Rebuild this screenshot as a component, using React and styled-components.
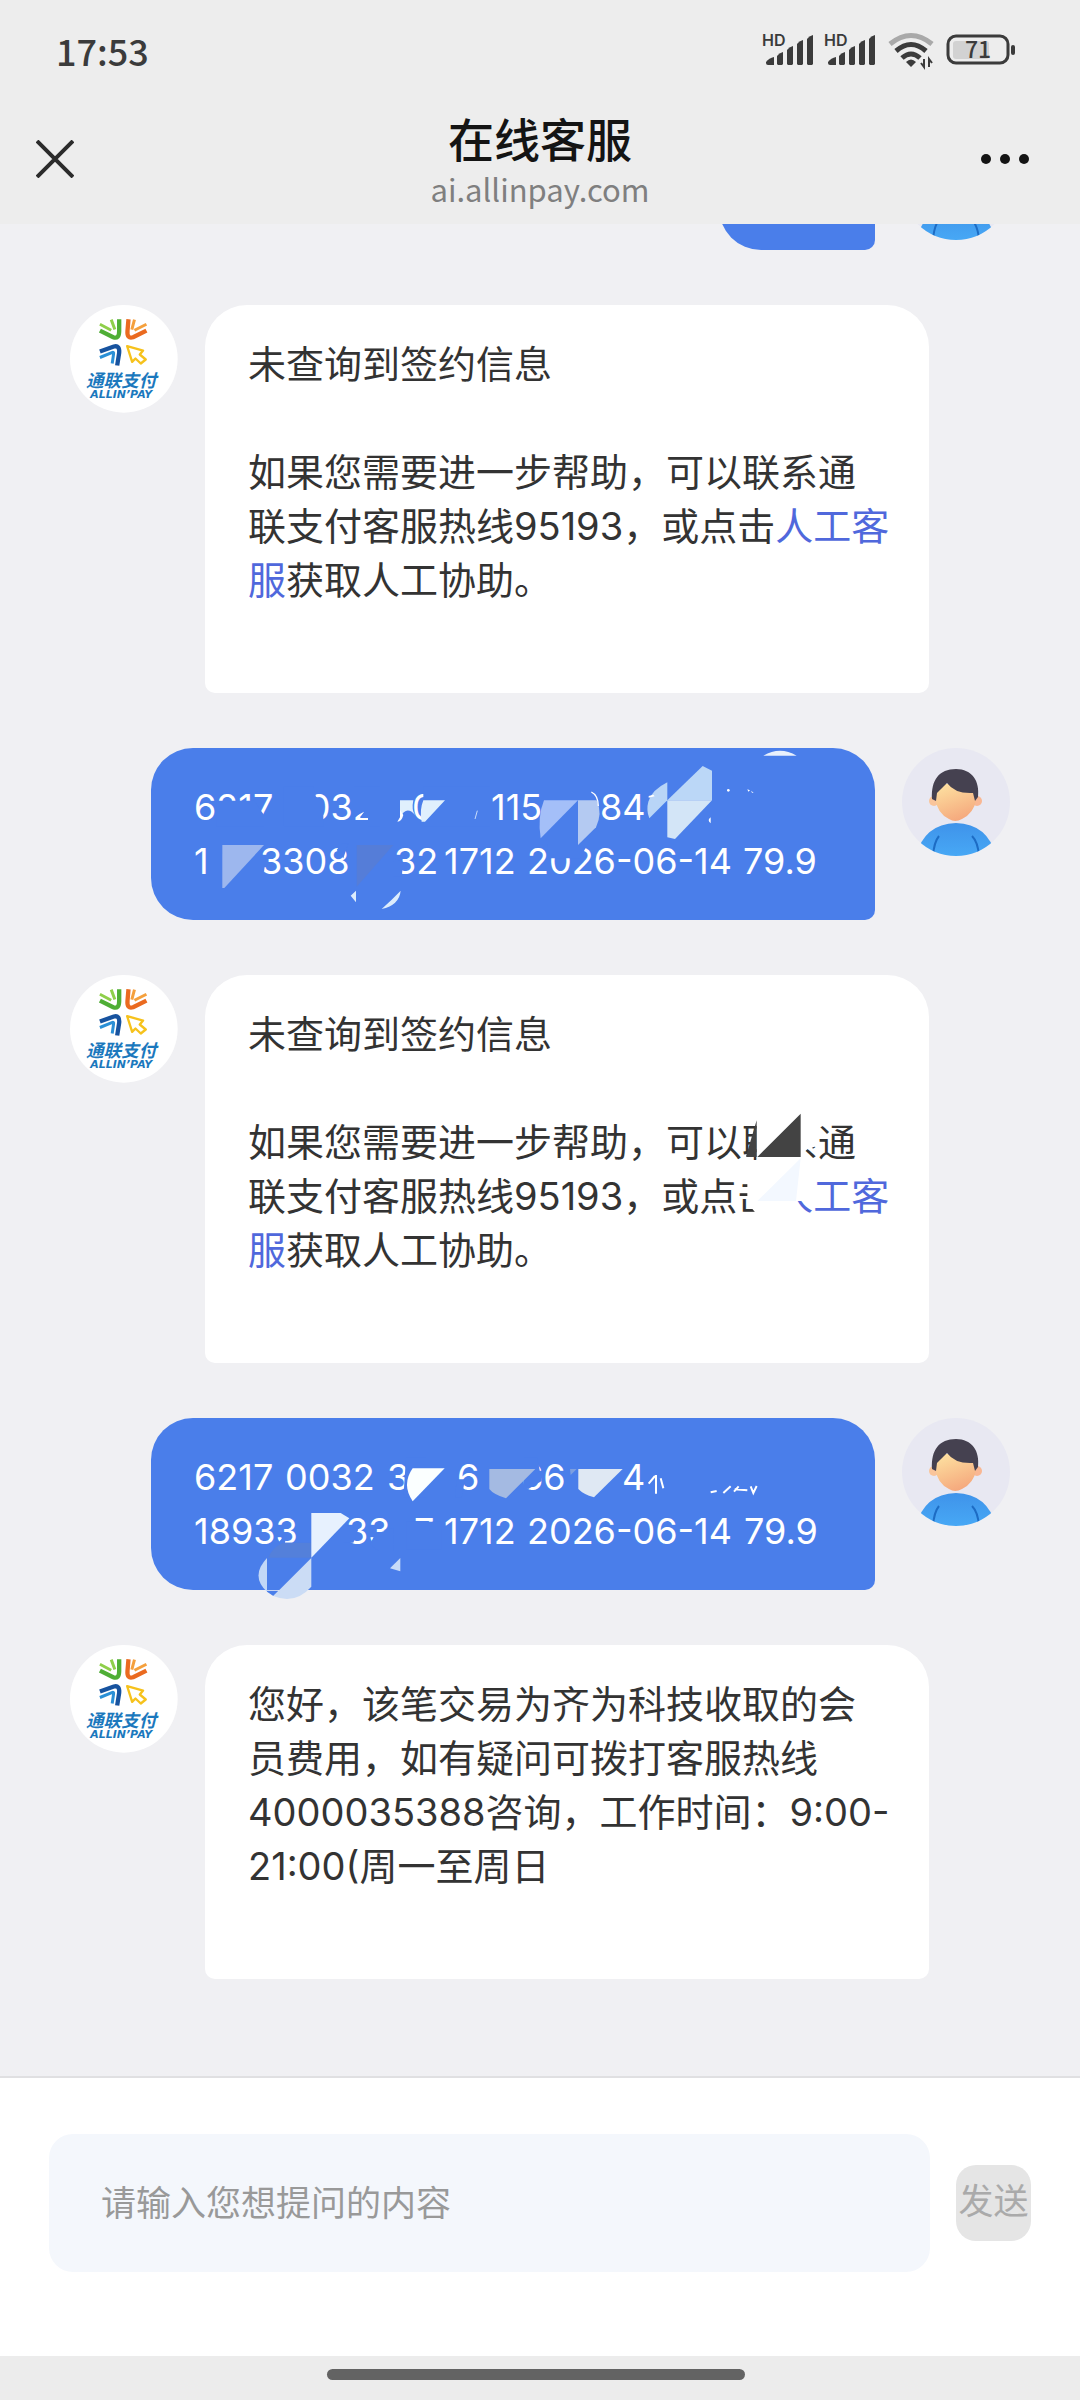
import styled, { createGlobalStyle } from "styled-components";
import { useState } from "react";

const BLUE = "#4a7eea";

const App = () => {
  const [question, setQuestion] = useState("");
  return (
    <Page>
      <GlobalStyle />
      <StatusBar>
        <Clock>17:53</Clock>
        <StatusIcons>
          <Signal />
          <Signal />
          <Wifi />
          <Battery />
        </StatusIcons>
      </StatusBar>
      <TitleBar>
        <CloseButton aria-label="关闭">
          <svg width="38" height="38" viewBox="0 0 38 38">
            <path d="M1 1L37 37M37 1L1 37" stroke="#2b2b2b" strokeWidth="4" />
          </svg>
        </CloseButton>
        <Titles>
          <Title>在线客服</Title>
          <Domain>ai.allinpay.com</Domain>
        </Titles>
        <MoreButton aria-label="更多">
          <svg width="50" height="12" viewBox="0 0 50 12">
            <circle cx="6" cy="6" r="5" fill="#141414" />
            <circle cx="25" cy="6" r="5" fill="#141414" />
            <circle cx="44" cy="6" r="5" fill="#141414" />
          </svg>
        </MoreButton>
      </TitleBar>

      <Chat>
        <UserRow>
          <ShortBubble />
          <UserAvatar />
        </UserRow>
        <BotRow>
          <BotAvatar />
          <BotBubble>
            <NoContract />
          </BotBubble>
        </BotRow>
        <UserRow>
          <UserBubble>
            <Line>
              <Chunk $w={91}>6217</Chunk>
              <Chunk $w={102}>0032</Chunk>
              <Chunk $w={25} />
              <Chunk $w={79}>0</Chunk>
              <Chunk $w={109}>115</Chunk>
              <Chunk $w={50}>84</Chunk>
            </Line>
            <Line>
              <Chunk $w={66}>1</Chunk>
              <Chunk $w={134}>3308</Chunk>
              <Chunk $w={50}>32</Chunk>
              <Chunk $w={83}>1712</Chunk>
              <Chunk $w={216}>2026-06-14</Chunk>
              <Chunk $w={70}>79.9</Chunk>
            </Line>
            <MosaicFirst />
          </UserBubble>
          <UserAvatar />
        </UserRow>
        <BotRow>
          <BotAvatar />
          <BotBubble>
            <NoContract />
            <MosaicReply />
          </BotBubble>
        </BotRow>
        <UserRow>
          <UserBubble>
            <Line>
              <Chunk $w={91}>6217</Chunk>
              <Chunk $w={102}>0032</Chunk>
              <Chunk $w={70}>3</Chunk>
              <Chunk $w={64}>6</Chunk>
              <Chunk $w={101}>66</Chunk>
              <Chunk $w={30}>4</Chunk>
            </Line>
            <Line>
              <Chunk $w={152}>18933</Chunk>
              <Chunk $w={68}>33</Chunk>
              <Chunk $w={30}>7</Chunk>
              <Chunk $w={83}>1712</Chunk>
              <Chunk $w={217}>2026-06-14</Chunk>
              <Chunk $w={70}>79.9</Chunk>
            </Line>
            <MosaicSecond />
          </UserBubble>
          <UserAvatar />
        </UserRow>
        <BotRow>
          <BotAvatar />
          <BotBubble>
            <Text>
              您好，该笔交易为齐为科技收取的会员费用，如有疑问可拨打客服热线4000035388咨询，工作时间：9:00-
              <wbr />
              21:00(周一至周日
            </Text>
          </BotBubble>
        </BotRow>
      </Chat>

      <Composer onSubmit={(e) => e.preventDefault()}>
        <QuestionInput
          aria-label="提问内容"
          placeholder="请输入您想提问的内容"
          value={question}
          onChange={(e) => setQuestion(e.target.value)}
        />
        <SendButton type="submit">发送</SendButton>
      </Composer>
      <NavBar>
        <Handle />
      </NavBar>
    </Page>
  );
};

const NoContract = () => (
  <>
    <Text>未查询到签约信息</Text>
    <SpacedText>
      如果您需要进一步帮助，可以联系通联支付客服热线95193，或点击
      <a href="#agent">人工客服</a>获取人工协助。
    </SpacedText>
  </>
);

const Signal = () => (
  <StatusIcon width="50" height="34" viewBox="0 0 50 34">
    <text x="-2" y="13" fontFamily="Inter, sans-serif" fontSize="16" fontWeight="600" fill="#3b3b3b">
      HD
    </text>
    <g fill="#3b3b3b">
      <path d="M2 29q3-4 8-5v8h-6q-2 0-2-2z" />
      <path d="M13 23q2-3 6-4v12l-1 1h-4l-1-1z" />
      <path d="M23 17q2-3 6-4v18l-1 1h-4l-1-1z" />
      <path d="M33 11q2-3 6-4v24l-1 1h-4l-1-1z" />
      <path d="M43 6q2-3 6-4v29l-1 1h-4l-1-1z" />
    </g>
  </StatusIcon>
);

const Wifi = () => (
  <StatusIcon width="46" height="36" viewBox="0 0 46 36">
    <g fill="none" strokeWidth="5">
      <path d="M2 12q21-17 42 0" stroke="#a9a9a9" />
      <path d="M8 19q15-13 30 0" stroke="#3b3b3b" />
      <path d="M14 26q9-8 18 0" stroke="#3b3b3b" />
    </g>
    <path d="M18 30q5-5 10 0l-5 5z" fill="#3b3b3b" />
    <path d="M36 27v8l-3-4M41 35v-8l3 4" fill="none" stroke="#3b3b3b" strokeWidth="2" />
  </StatusIcon>
);

const Battery = () => (
  <StatusIcon width="70" height="32" viewBox="0 0 70 32">
    <rect x="2" y="2" width="60" height="27" rx="8" fill="none" stroke="#3b3b3b" strokeWidth="3" />
    <rect x="7" y="7" width="36" height="18" rx="3" fill="#d2d2d2" />
    <rect x="65" y="11" width="4" height="10" rx="2" fill="#3b3b3b" />
    <text
      x="32"
      y="24"
      textAnchor="middle"
      fontFamily="'Noto Sans CJK SC', sans-serif"
      fontSize="23"
      fontWeight="500"
      fill="#3b3b3b"
    >
      71
    </text>
  </StatusIcon>
);

const BotAvatar = () => (
  <Avatar viewBox="60 44 325 325" role="img" aria-label="通联支付">
    <circle cx="222" cy="206" r="162" fill="#fff" />
    <g fill="none" strokeWidth="13">
      <path d="M150 102L184 120M184 88L195 118" stroke="#8fcf4a" strokeWidth="9" />
      <path d="M150 121L190 141Q208 147 208 122V87" stroke="#4fae35" />
      <path d="M290 102L254 120M254 88L246 118" stroke="#f5a03c" strokeWidth="9" />
      <path d="M290 121L250 141Q231 147 233 122L236 87" stroke="#ea6a1f" />
      <path d="M150 184L192 169Q210 164 208 188L202 226" stroke="#17539f" />
      <path d="M150 202L186 187Q193 184 191 192L187 220" stroke="#2a8fd6" strokeWidth="9" />
      <path
        d="M232 168L280 181L270 193L288 208L273 220L257 205L247 215Z"
        stroke="#f6c21c"
        strokeWidth="7"
        strokeLinejoin="round"
      />
    </g>
    <g fill="#1b78bd" fontStyle="italic" fontWeight="700">
      <text x="108" y="290" fontSize="53" fontFamily="'Noto Sans CJK SC', sans-serif">
        通联支付
      </text>
      <text x="121" y="325" fontSize="33" fontFamily="'DejaVu Sans', sans-serif">
        ALLIN’PAY
      </text>
    </g>
  </Avatar>
);

const UserAvatar = () => (
  <Avatar viewBox="0 0 108 108" role="img" aria-label="用户">
    <defs>
      <clipPath id="round">
        <circle cx="54" cy="54" r="54" />
      </clipPath>
      <linearGradient id="skin" x1="0.2" y1="0" x2="0.6" y2="1">
        <stop offset="0" stopColor="#fde0a0" />
        <stop offset="1" stopColor="#f5a77c" />
      </linearGradient>
      <linearGradient id="shirt" x1="0" y1="0" x2="0" y2="1">
        <stop offset="0" stopColor="#3f93ea" />
        <stop offset="1" stopColor="#47a8f5" />
      </linearGradient>
    </defs>
    <g clipPath="url(#round)">
      <rect width="108" height="108" fill="#e8e8f2" />
      <path d="M14 108Q22 76 54 75Q86 76 94 108Z" fill="url(#shirt)" />
      <path d="M37 88Q32 94 31 108M70 88Q76 94 77 108" fill="none" stroke="#1d6cc4" strokeWidth="2" />
      <circle cx="32" cy="53" r="5" fill="#f9c59b" />
      <circle cx="75" cy="53" r="5" fill="#f9b793" />
      <path d="M34 36H74V52Q72 65 60 71Q53 75 47 71Q35 65 34 52Z" fill="url(#skin)" />
      <path d="M30 51C29 32 37 21 54 21C70 21 78 33 76 49L73 53L71 45Q53 46 45 35Q39 41 35 45L34 53Z" fill="#454150" />
    </g>
  </Avatar>
);

// Redaction brush strokes: patches hide the digits, facets lie on top of them
const MosaicFirst = () => (
  <Mosaic width="724" height="172" viewBox="33 54 2172 516">
    <g fill={BLUE}>
      <path d="M230 212L342 212L372 255L372 290L230 290Z" />
      <path d="M430 170H520L528 200L550 210V290H430Z" />
      <path d="M642 170H720V290H684L684 264L660 264L672 245L642 262Z" />
      <path d="M850 170H1050V290H850Z" />
      <path d="M360 385L378 378L372 425L360 425Z" />
      <path d="M590 360L610 385L625 340H605Z" />
      <path d="M760 385L790 395L785 440H760Z" />
      <path d="M1220 330H1350L1320 385H1225Z" />
    </g>
    <path d="M247 345H372L253 474H247Z" fill="#9db7ee" />
    <path d="M650 345H760L650 470Z" fill="#557dd8" />
    <path d="M780 211H915L855 275H845Q838 240 850 211H820Q814 240 825 255Q800 225 780 262Z" fill="#e0f0fd" />
    <path d="M780 240V262L772 275Q785 275 790 255Z" fill="#fff" />
    <path d="M1212 211H1314L1202 325Q1192 260 1212 211Z" fill="#a4bff8" />
    <path d="M1314 211H1370Q1388 250 1368 292L1314 345Z" fill="#b4caf2" />
    <path d="M1354 186Q1374 195 1375 228" fill="none" stroke="#fff" strokeWidth="4" />
    <path d="M1525 215Q1535 180 1582 157V211L1528 265Q1518 240 1525 215Z" fill="#b8d5f7" />
    <path d="M1582 211L1688 108L1716 122V211Z" fill="#bbd7f7" />
    <path d="M1582 211H1716L1605 327L1582 322Z" fill="#d3e5f7" />
    <path d="M1870 77Q1920 48 1970 77Z" fill="#e8f0fc" />
    <path d="M632 497L648 482V517ZM725 537Q755 510 782 482Q778 525 725 537Z" fill="#dcecfc" />
    <path d="M1005 267L1012 242" stroke="#c8dcfb" strokeWidth="3" />
    <g fill="#fff">
      <circle cx="1765" cy="181" r="4" />
      <path d="M1822 178l8 3-5 4zM1833 182l8 6h-5z" />
      <path d="M1712 262Q1700 270 1712 280Z" />
      <path d="M1526 198l14-4 4 5-18 4z" />
    </g>
  </Mosaic>
);

const MosaicReply = () => (
  <Mosaic width="724" height="388" viewBox="-1425 -318 2172 1164">
    <g fill="#fff">
      <path d="M230 98H368V245H230ZM366 120H408V196L382 205L366 220Z" />
      <path d="M202 240H394V360H345L335 402H232L202 365Z" />
    </g>
    <path d="M232 228L362 98V228ZM198 226L230 118V228H200Z" fill="#434343" />
    <path d="M232 360L362 232L348 360Z" fill="#f3f8ff" />
  </Mosaic>
);

const MosaicSecond = () => (
  <Mosaic width="724" height="173" viewBox="33 51 2172 519">
    <g fill={BLUE}>
      <path d="M798 170H860V290H790Z" />
      <path d="M950 235L975 235L965 290H945Z" />
      <path d="M1150 170H1192L1205 240L1165 264L1150 262Z" />
      <path d="M420 425H520V445H410ZM440 395L415 425H435Z" />
      <path d="M610 370L655 385L640 425H610Z" />
      <path d="M690 430L705 400L760 380V450H715Z" />
      <path d="M800 362H905V445H800Z" />
    </g>
    <path d="M430 425H513V470H385Q395 440 430 425Z" fill="#5480da" />
    <path d="M818 202H914L818 301Q784 250 818 202Z" fill="#fbffff" />
    <path d="M1048 204H1186L1098 292Q1060 280 1048 264Z" fill="#a4bae2" />
    <path d="M1290 204H1310L1292 222Z" fill="#7d9fe0" />
    <path d="M1315 204H1448L1362 289Q1330 280 1315 264Z" fill="#dfe8f3" />
    <path d="M514 336H602L628 352L514 470Z" fill="#e7f1fe" />
    <path d="M381 471V572Q330 525 381 471Z" fill="#c2d8f7" />
    <path d="M381 569V572L400 585L416 569Z" fill={BLUE} />
    <path d="M514 471V557Q465 612 400 585Z" fill="#cbdcf5" />
    <path d="M750 502L781 471V511Z" fill="#c8dcf8" />
    <g fill="none" stroke="#fff" strokeWidth="6">
      <path d="M1526 248L1545 225M1548 222V278M1562 232L1570 262" />
      <path d="M1712 274L1730 270M1750 276L1772 256M1782 272L1796 256M1784 265L1822 268M1832 256L1840 276L1850 255" />
    </g>
  </Mosaic>
);

const GlobalStyle = createGlobalStyle`
  * {
    box-sizing: border-box;
  }
  body {
    margin: 0;
    font-family: Inter, "Noto Sans CJK SC", sans-serif;
  }
`;

const Page = styled.div`
  display: flex;
  flex-direction: column;
  height: 100vh;
  background-color: #f0f0f3;
`;

const StatusBar = styled.div`
  flex: none;
  display: flex;
  align-items: center;
  justify-content: space-between;
  height: 100px;
  padding: 0 64px 0 56px;
  background-color: #ededed;
`;

const Clock = styled.div`
  font-family: "Noto Sans CJK SC", sans-serif;
  font-size: 36px;
  font-weight: 500;
  line-height: 54px;
  color: #3b3b3b;
`;

const StatusIcons = styled.div`
  display: flex;
  align-items: center;
  gap: 12px;
`;

const StatusIcon = styled.svg`
  flex: none;
  overflow: visible;
`;

const TitleBar = styled.header`
  flex: none;
  display: flex;
  align-items: center;
  justify-content: space-between;
  height: 124px;
  padding: 0 30px 6px;
  background-color: #ededed;
`;

const IconButton = styled.button`
  display: flex;
  align-items: center;
  width: 90px;
  height: 50px;
  border: none;
  background: none;
  cursor: pointer;
`;

const CloseButton = styled(IconButton)`
  justify-content: flex-start;
  padding: 0 6px;
`;

const MoreButton = styled(IconButton)`
  justify-content: flex-end;
  padding: 0 20px;
`;

const Titles = styled.div`
  display: flex;
  flex-direction: column;
  align-items: center;
  font-family: "Noto Sans CJK SC", sans-serif;
`;

const Title = styled.h1`
  margin: 0;
  font-size: 46px;
  font-weight: 500;
  line-height: 60px;
  color: #141414;
`;

const Domain = styled.div`
  font-size: 31px;
  line-height: 44px;
  color: #7f7f7f;
`;

const Chat = styled.main`
  flex: 1;
  min-height: 0;
  display: flex;
  flex-direction: column;
  justify-content: flex-end;
  gap: 55px;
  padding-bottom: 97px;
  overflow: hidden;
`;

const BotRow = styled.div`
  display: flex;
  align-items: flex-start;
  gap: 27px;
  padding: 0 151px 0 70px;
`;

const UserRow = styled.div`
  display: flex;
  align-items: flex-start;
  justify-content: flex-end;
  gap: 27px;
  padding: 0 70px 0 151px;
`;

const Avatar = styled.svg`
  flex: none;
  width: 108px;
  height: 108px;
`;

const Bubble = styled.div`
  position: relative;
  flex: 1;
  min-width: 0;
  line-height: 54px;
`;

const BotBubble = styled(Bubble)`
  padding: 32px 36px 86px 43px;
  border-radius: 42px 42px 10px 10px;
  background-color: #fff;
  font-size: 38px;
  color: #333;
  a {
    color: #5068dc;
    text-decoration: none;
  }
`;

const UserBubble = styled(Bubble)`
  padding: 32px 43px;
  border-radius: 42px 42px 10px 42px;
  background-color: ${BLUE};
  font-size: 36px;
  color: #fff;
`;

const ShortBubble = styled(UserBubble)`
  flex: none;
  width: 156px;
  height: 118px;
`;

const Text = styled.p`
  margin: 0;
`;

const SpacedText = styled(Text)`
  margin-top: 54px;
`;

const Line = styled.div`
  display: flex;
  height: 54px;
  white-space: nowrap;
`;

const Chunk = styled.span`
  flex: none;
  width: ${(props) => props.$w}px;
`;

const Mosaic = styled.svg`
  position: absolute;
  top: 0;
  left: 0;
  overflow: visible;
  pointer-events: none;
`;

const Composer = styled.form`
  flex: none;
  display: flex;
  align-items: center;
  gap: 26px;
  padding: 56px 49px 84px;
  border-top: 2px solid #e0e0e2;
  background-color: #fff;
`;

const QuestionInput = styled.input`
  flex: 1;
  min-width: 0;
  height: 138px;
  padding: 0 52px;
  border: none;
  border-radius: 24px;
  background-color: #f4f7fc;
  font-family: inherit;
  font-size: 35px;
  color: #333;
  &::placeholder {
    color: #999;
  }
`;

const SendButton = styled.button`
  width: 75px;
  height: 76px;
  padding: 0 0 4px;
  border: none;
  border-radius: 20px;
  background-color: #e5e5e5;
  font-family: inherit;
  font-size: 35px;
  line-height: 54px;
  white-space: nowrap;
  color: #aaa;
`;

const NavBar = styled.div`
  flex: none;
  display: flex;
  justify-content: center;
  height: 44px;
  padding: 13px 8px 0 0;
  background-color: #ececec;
`;

const Handle = styled.div`
  width: 39%;
  height: 11px;
  border-radius: 6px;
  background-color: #636363;
`;

export default App;
